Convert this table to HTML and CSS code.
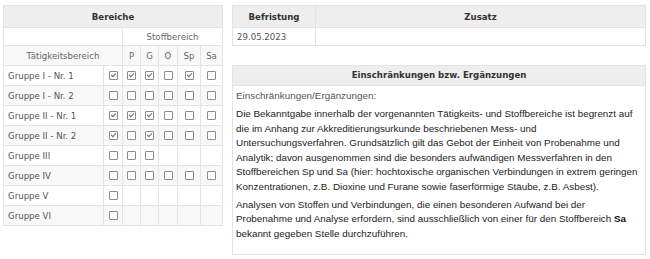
FILE: index.html
```html
<!DOCTYPE html>
<html lang="de">
<head>
<meta charset="utf-8">
<title>Bereiche</title>
<link rel="stylesheet" href="styles.css">
</head>
<body>
<div class="page">
  <table class="areas">
    <colgroup>
      <col class="c-name"><col class="c-main"><col class="c-p"><col class="c-g"><col class="c-o"><col class="c-sp"><col class="c-sa">
    </colgroup>
    <tr class="head"><th colspan="7">Bereiche</th></tr>
    <tr class="sub"><td colspan="2"></td><td colspan="5" class="ctr">Stoffbereich</td></tr>
    <tr class="sub alt"><td colspan="2" class="ctr">Tätigkeitsbereich</td><td class="ctr">P</td><td class="ctr">G</td><td class="ctr">O</td><td class="ctr">Sp</td><td class="ctr">Sa</td></tr>
    <tr><td>Gruppe I - Nr. 1</td><td class="ctr"><span class="cb on"></span></td><td class="ctr"><span class="cb on"></span></td><td class="ctr"><span class="cb on"></span></td><td class="ctr"><span class="cb"></span></td><td class="ctr"><span class="cb on"></span></td><td class="ctr"><span class="cb"></span></td></tr>
    <tr class="alt"><td>Gruppe I - Nr. 2</td><td class="ctr"><span class="cb"></span></td><td class="ctr"><span class="cb"></span></td><td class="ctr"><span class="cb"></span></td><td class="ctr"><span class="cb"></span></td><td class="ctr"><span class="cb"></span></td><td class="ctr"><span class="cb"></span></td></tr>
    <tr><td>Gruppe II - Nr. 1</td><td class="ctr"><span class="cb on"></span></td><td class="ctr"><span class="cb on"></span></td><td class="ctr"><span class="cb on"></span></td><td class="ctr"><span class="cb"></span></td><td class="ctr"><span class="cb"></span></td><td class="ctr"><span class="cb"></span></td></tr>
    <tr class="alt"><td>Gruppe II - Nr. 2</td><td class="ctr"><span class="cb on"></span></td><td class="ctr"><span class="cb"></span></td><td class="ctr"><span class="cb on"></span></td><td class="ctr"><span class="cb"></span></td><td class="ctr"><span class="cb"></span></td><td class="ctr"><span class="cb"></span></td></tr>
    <tr><td>Gruppe III</td><td class="ctr"><span class="cb"></span></td><td class="ctr"><span class="cb"></span></td><td class="ctr"><span class="cb"></span></td><td></td><td></td><td></td></tr>
    <tr class="alt"><td>Gruppe IV</td><td class="ctr"><span class="cb"></span></td><td class="ctr"><span class="cb"></span></td><td class="ctr"><span class="cb"></span></td><td class="ctr"><span class="cb"></span></td><td class="ctr"><span class="cb"></span></td><td class="ctr"><span class="cb"></span></td></tr>
    <tr><td>Gruppe V</td><td class="ctr"><span class="cb"></span></td><td></td><td></td><td></td><td></td><td></td></tr>
    <tr class="alt"><td>Gruppe VI</td><td class="ctr"><span class="cb"></span></td><td></td><td></td><td></td><td></td><td></td></tr>
  </table>

  <div class="right">
    <table class="term">
      <colgroup><col class="c-date"><col></colgroup>
      <tr class="head"><th>Befristung</th><th>Zusatz</th></tr>
      <tr class="row"><td>29.05.2023</td><td></td></tr>
    </table>

    <div class="note">
      <div class="note-head">Einschränkungen bzw. Ergänzungen</div>
      <div class="note-body">
        <p class="label">Einschränkungen/Ergänzungen:</p>
        <p>Die Bekanntgabe innerhalb der vorgenannten Tätigkeits- und Stoffbereiche ist begrenzt auf die im Anhang zur Akkreditierungsurkunde beschriebenen Mess- und Untersuchungsverfahren. Grundsätzlich gilt das Gebot der Einheit von Probenahme und Analytik; davon ausgenommen sind die besonders aufwändigen Messverfahren in den Stoffbereichen Sp und Sa (hier: hochtoxische organischen Verbindungen in extrem geringen Konzentrationen, z.B. Dioxine und Furane sowie faserförmige Stäube, z.B. Asbest).</p>
        <p>Analysen von Stoffen und Verbindungen, die einen besonderen Aufwand bei der Probenahme und Analyse erfordern, sind ausschließlich von einer für den Stoffbereich <b>Sa</b> bekannt gegeben Stelle durchzuführen.</p>
      </div>
    </div>
  </div>
</div>
</body>
</html>
```

FILE: styles.css
```css
html, body {
  margin: 0;
  background: #ffffff;
}
body {
  font-family: "DejaVu Sans", Verdana, sans-serif;
  font-size: 8.6px;
  color: #555555;
}
.page {
  display: flex;
  align-items: flex-start;
  gap: 9px;
  padding: 5px 3px;
}
table {
  border-collapse: collapse;
  table-layout: fixed;
}
td, th {
  border: 1px solid #e3e3e3;
  padding: 0 4px;
  white-space: nowrap;
  overflow: hidden;
}
th {
  font-weight: bold;
  color: #333333;
  text-align: center;
}
.areas {
  width: 219px;
}
.c-name { width: 100px; }
.c-main { width: 19px; }
.c-p { width: 18px; }
.c-g { width: 18px; }
.c-o { width: 19px; }
.c-sp { width: 23px; }
.c-sa { width: 22px; }

.areas tr { height: 20px; }
.areas tr.head { height: 22px; }
.areas tr.sub { height: 18px; }
.areas tr.sub.alt { height: 20px; }
.head { background: #eeeeee; }
.alt { background: #f8f8f8; }
.ctr { text-align: center; padding: 0; }
.sub td { color: #666666; }

.cb {
  display: inline-block;
  position: relative;
  width: 7px;
  height: 7px;
  border: 1px solid #8c8c8c;
  border-radius: 1px;
  background: #ffffff;
  vertical-align: middle;
  margin-top: -2px;
}
.cb.on::after {
  content: "";
  position: absolute;
  left: 2px;
  top: 0px;
  width: 2px;
  height: 4px;
  border: solid #6a6a6a;
  border-width: 0 1px 1px 0;
  transform: rotate(45deg);
}

.right {
  width: 414px;
  display: flex;
  flex-direction: column;
  gap: 19px;
}
.term {
  width: 414px;
}
.c-date { width: 83px; }
.term tr.head { height: 22px; }
.term tr.row { height: 18px; }

.note {
  border: 1px solid #e3e3e3;
}
.note-head {
  background: #eeeeee;
  border-bottom: 1px solid #e3e3e3;
  height: 19px;
  line-height: 19px;
  font-weight: bold;
  color: #333333;
  text-align: center;
}
.note-body {
  padding: 3px 4px 13px 3px;
  font-family: "Liberation Sans", Arial, sans-serif;
  font-size: 9.85px;
  line-height: 14.5px;
  color: #222222;
}
.note-body p {
  margin: 0 0 3.5px 0;
}
.note-body p:last-child {
  margin-bottom: 0;
}
.note-body .label {
  color: #555555;
}
.note-body b {
  color: #111111;
}
```
